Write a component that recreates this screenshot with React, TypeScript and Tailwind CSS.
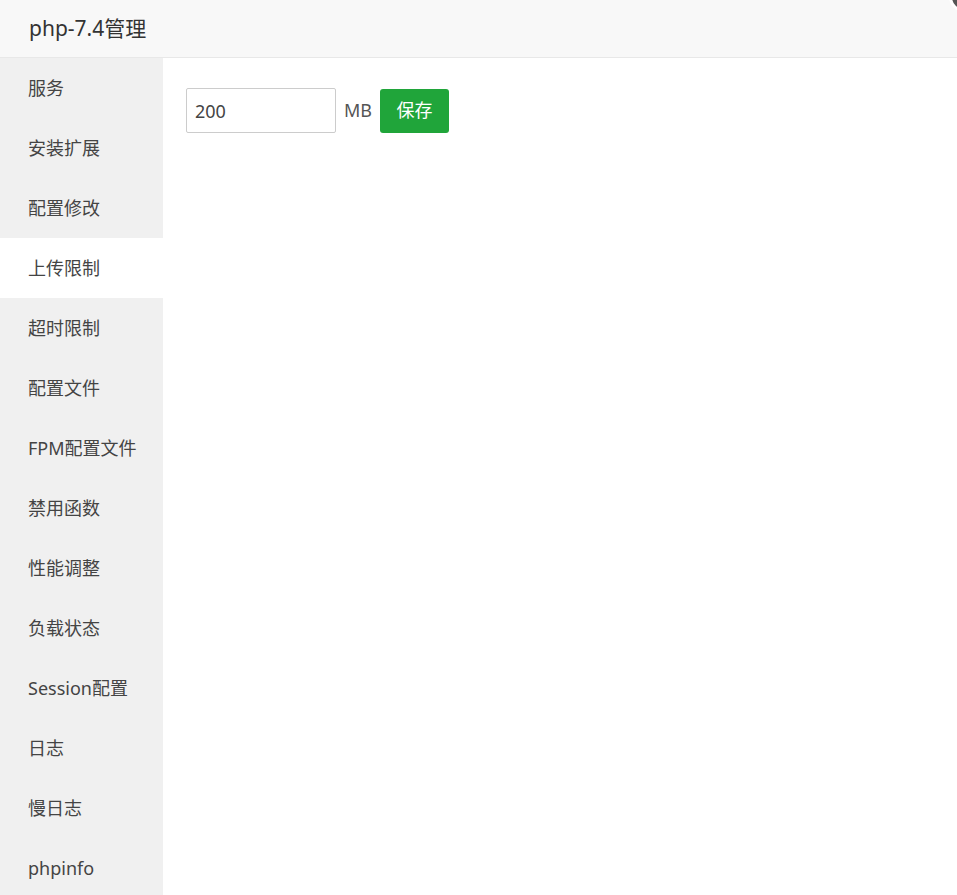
import { useState } from "react";

const menu = [
  "服务",
  "安装扩展",
  "配置修改",
  "上传限制",
  "超时限制",
  "配置文件",
  "FPM配置文件",
  "禁用函数",
  "性能调整",
  "负载状态",
  "Session配置",
  "日志",
  "慢日志",
  "phpinfo",
];

export default function App() {
  const [active, setActive] = useState(3);
  const [size, setSize] = useState("200");

  return (
    <div
      className="relative h-[895px] w-[957px] overflow-hidden bg-white text-[#333]"
      style={{ fontFamily: '"Noto Sans", "Noto Sans CJK SC", sans-serif' }}
    >
      <div className="h-[58px] border-b border-[#e8e8e8] bg-[#f8f8f8] pl-[29px] text-[21px] leading-[56px] text-[#333]">
        php-7.4管理
      </div>
      <div className="flex h-[837px]">
        <div className="w-[163px] shrink-0 bg-[#f0f0f0]">
          {menu.map((m, i) => (
            <div
              key={m}
              onClick={() => setActive(i)}
              className={
                "h-[60px] cursor-pointer pl-[28px] text-[18px] leading-[60px] text-[#444] " +
                (i === active ? "bg-white" : "")
              }
            >
              {m}
            </div>
          ))}
        </div>
        <div className="flex-1 pl-[23px] pt-[30px]">
          <div className="flex items-center">
            <input
              value={size}
              onChange={(e) => setSize(e.target.value)}
              className="h-[45px] w-[150px] rounded-[2px] border border-[#ccc] px-[8px] text-[18px] text-[#444] outline-none"
            />
            <span className="ml-[8px] text-[18px] text-[#555]">MB</span>
            <button className="ml-[8px] h-[44px] w-[69px] rounded-[3px] bg-[#20a53a] text-[18px] text-white">
              保存
            </button>
          </div>
        </div>
      </div>
      <div className="absolute right-[-22px] top-[-18px] h-[30px] w-[30px] rounded-full border-[3px] border-white bg-[#555]" />
    </div>
  );
}
